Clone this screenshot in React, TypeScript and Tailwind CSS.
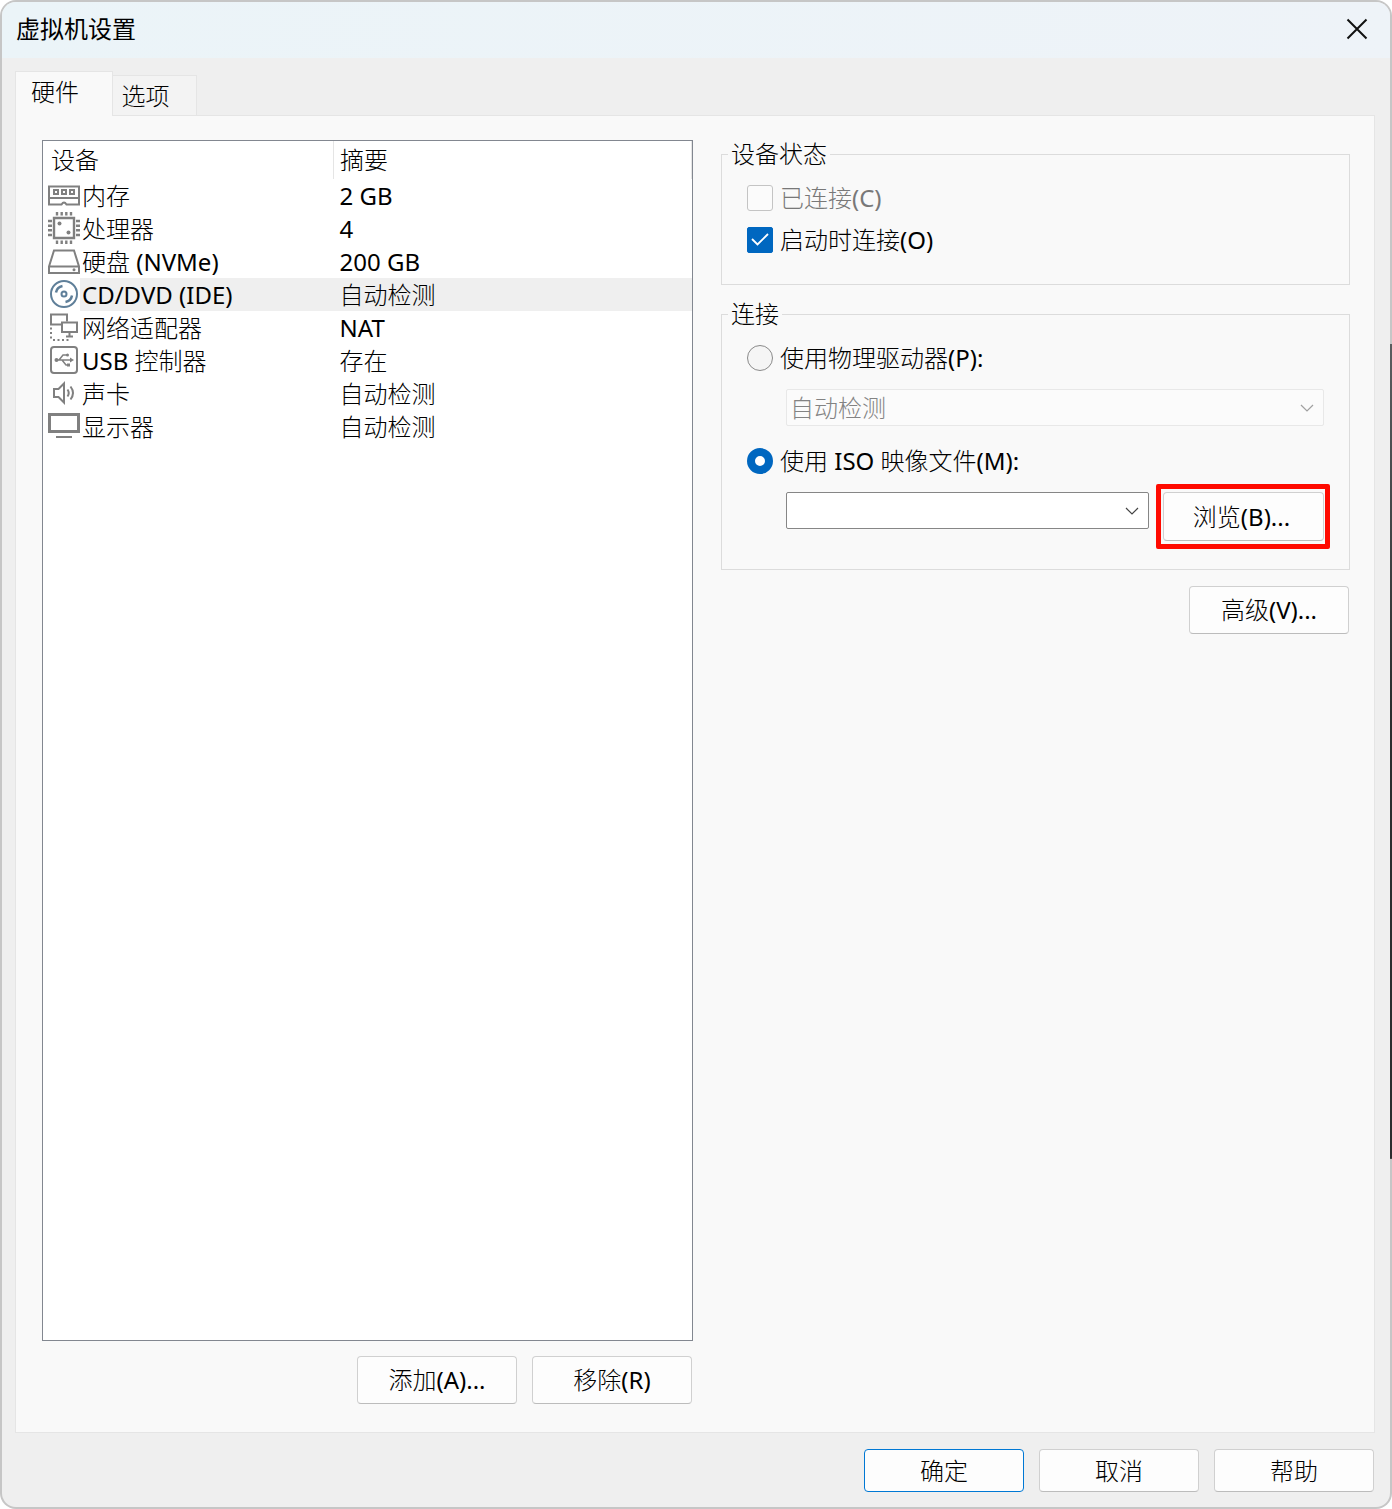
import React, { useState } from 'react';
import { clsx } from 'clsx';

interface Device {
  id: string;
  name: string;
  summary: string;
  icon: React.ReactNode;
}

const devices: Device[] = [
  {
    id: 'memory',
    name: '内存',
    summary: '2 GB',
    icon: (
      <>
        <path d="M1 7.500h30V19H1z" strokeWidth="2" />
        <path d="M1 19v6.500h12.500q2.500-4 5 0H31V19" strokeWidth="2" />
        <path d="M6 11h4v4H6zM14 11h4v4h-4zM22 11h4v4h-4z" strokeWidth="2" />
      </>
    ),
  },
  {
    id: 'cpu',
    name: '处理器',
    summary: '4',
    icon: (
      <>
        <path d="M6 6h20v20H6z" strokeWidth="2.400" />
        <path d="M9 0v3.500M13.700 0v3.500M18.300 0v3.500M23 0v3.500M9 28.500V32M13.700 28.500V32M18.300 28.500V32M23 28.500V32" strokeWidth="2.400" />
        <path d="M0 9h4M0 13.700h4M0 18.300h4M0 23h4M28 9h4M28 13.700h4M28 18.300h4M28 23h4" strokeWidth="2.400" />
        <circle cx="11.500" cy="11.500" r="2" fill="currentColor" stroke="none" />
        <circle cx="20.500" cy="20.500" r="2" fill="currentColor" stroke="none" />
      </>
    ),
  },
  {
    id: 'disk',
    name: '硬盘 (NVMe)',
    summary: '200 GB',
    icon: (
      <>
        <path d="M1 21.500L6 5.500h20l5 16V28H1zM1 21.500h30" strokeWidth="2" />
        <circle cx="26" cy="24.700" r="1.500" fill="currentColor" stroke="none" />
      </>
    ),
  },
  {
    id: 'cd',
    name: 'CD/DVD (IDE)',
    summary: '自动检测',
    icon: (
      <g className="text-[#5f7f99]">
        <circle cx="16" cy="16" r="13" strokeWidth="2" stroke="currentColor" />
        <circle cx="16" cy="16" r="2.500" strokeWidth="2" stroke="currentColor" />
        <path d="M8 14.500Q9 9 14.500 8M24 17.500Q23 23 17.500 24" strokeWidth="2.500" stroke="currentColor" />
      </g>
    ),
  },
  {
    id: 'network',
    name: '网络适配器',
    summary: 'NAT',
    icon: (
      <>
        <path d="M13 13.500H3V3.500h16v7" strokeWidth="2" />
        <path d="M14 11.500h15v9.500H14zM21.500 21v4M18 25.500h7" strokeWidth="2" />
        <path d="M3 16.500v13M5 29h16" strokeWidth="2" strokeDasharray="2 2.500" />
      </>
    ),
  },
  {
    id: 'usb',
    name: 'USB 控制器',
    summary: '存在',
    icon: (
      <>
        <rect x="3" y="3" width="26" height="26" rx="3" strokeWidth="2" />
        <path d="M8 16h15M11 16l4-5h4M14 16l4 5h3" strokeWidth="1.500" />
        <path d="M22 13.500l4 2.500-4 2.500z" fill="currentColor" stroke="none" />
        <circle cx="8.500" cy="16" r="2" fill="currentColor" stroke="none" />
        <circle cx="19.500" cy="11" r="1.500" fill="currentColor" stroke="none" />
        <path d="M19 19.500h3v3h-3z" fill="currentColor" stroke="none" />
      </>
    ),
  },
  {
    id: 'sound',
    name: '声卡',
    summary: '自动检测',
    icon: (
      <>
        <path d="M6 12h4.500L16 6.500v19L10.500 20H6z" strokeWidth="2" />
        <path d="M19.500 12.500q2.500 3.500 0 7M22.500 9.500q5 6.500 0 13" strokeWidth="2" />
      </>
    ),
  },
  {
    id: 'display',
    name: '显示器',
    summary: '自动检测',
    icon: (
      <>
        <path d="M1.500 4.500h29v17h-29z" strokeWidth="3" />
        <path d="M8 27h16" strokeWidth="2" />
      </>
    ),
  },
];

const buttonClass = 'rounded-[4px] border bg-[#fdfdfd] text-center hover:bg-[#f3f8fc]';
const plainBorder = 'border-[#d0d0d0] border-b-[#bcbcbc]';

function DeviceIcon({ children }: { children: React.ReactNode }) {
  return (
    <svg viewBox="0 0 32 32" className="h-8 w-8 shrink-0 text-[#808080]" fill="none" stroke="currentColor" aria-hidden="true">
      {children}
    </svg>
  );
}

function Chevron({ className }: { className: string }) {
  return (
    <svg viewBox="0 0 14 8" className={clsx('pointer-events-none absolute h-2 w-3.5', className)} fill="none" stroke="currentColor" aria-hidden="true">
      <path d="M1 1l6 6 6-6" strokeWidth="1.200" />
    </svg>
  );
}

export default function App() {
  const [selected, setSelected] = useState('cd');
  const [connectAtStart, setConnectAtStart] = useState(true);
  const [source, setSource] = useState('iso');

  return (
    <div className="flex min-h-screen flex-col rounded-[16px] bg-[#c6c6c6] bg-[linear-gradient(#5a5d5f,#2b2d2e_45%)] bg-[size:2px_54%] bg-[position:100%_49.5%] bg-no-repeat p-0.5 font-['Noto_Sans','Noto_Sans_CJK_SC_Light','Noto_Sans_CJK_SC',sans-serif] text-2xl leading-7 text-black">
      <div className="flex flex-1 flex-col overflow-hidden rounded-[14px] bg-[#efefef]">
        {/* Title bar */}
        <header className="flex h-14 shrink-0 items-center justify-between bg-gradient-to-r from-[#ebf4f8] to-[#eef3f8] pr-[22px] pb-0.5 pl-3.5">
          <h1 className="pb-0.5 font-['Noto_Sans_CJK_SC',sans-serif]">虚拟机设置</h1>
          <button type="button" aria-label="关闭" className="text-[#111]">
            <svg viewBox="0 0 22 22" className="h-[22px] w-[22px]" fill="none" stroke="currentColor" aria-hidden="true">
              <path d="M1.500 1.500l19 19M20.500 1.500l-19 19" strokeWidth="2" />
            </svg>
          </button>
        </header>

        {/* Tabs */}
        <div role="tablist" className="mt-[13px] flex shrink-0 items-end px-[13px]">
          <button type="button" role="tab" aria-selected="true" className="z-10 -mb-px h-[45px] w-[98px] border border-b-0 border-[#e5e5e5] bg-[#f9f9f9] pr-[18px] pb-1">
            硬件
          </button>
          <button type="button" role="tab" aria-selected="false" className="h-10 w-[84px] border border-b-0 border-l-0 border-[#e5e5e5] bg-[#f3f3f3] pr-[18px]">
            选项
          </button>
        </div>

        <main className="mr-[15px] ml-[13px] grid flex-1 grid-cols-[651fr_629fr] gap-7 border border-[#e5e5e5] bg-[#f9f9f9] pt-6 pr-6 pb-7 pl-[26px]">
          <section className="flex flex-col">
            <div className="flex-1 border border-[#828790] bg-white">
              <table className="w-full table-fixed border-collapse text-left">
                <colgroup>
                  <col className="w-[44.8%]" />
                  <col />
                </colgroup>
                <thead>
                  <tr className="h-[38px]">
                    <th scope="col" className="border-r border-[#e5e5e5] pl-2 font-normal">设备</th>
                    <th scope="col" className="border-r border-[#e5e5e5] pl-1.5 font-normal">摘要</th>
                  </tr>
                </thead>
                <tbody>
                  {devices.map((device) => (
                    <tr key={device.id} className="h-[33px] cursor-default" onClick={() => setSelected(device.id)}>
                      <td className="p-0">
                        <div className="flex h-[33px] items-start pl-[5px]">
                          <DeviceIcon>{device.icon}</DeviceIcon>
                          <span className={clsx('flex h-full flex-1 items-center pl-0.5', device.id === selected && 'bg-[#efefef]')}>
                            {device.name}
                          </span>
                        </div>
                      </td>
                      <td className={clsx('py-0 pl-1.5', device.id === selected && 'bg-[#efefef]')}>{device.summary}</td>
                    </tr>
                  ))}
                </tbody>
              </table>
            </div>
            <div className="mt-[15px] mr-px flex justify-end gap-[15px]">
              <button type="button" className={clsx(buttonClass, plainBorder, 'h-12 w-40')}>添加(A)...</button>
              <button type="button" className={clsx(buttonClass, plainBorder, 'h-12 w-40')}>移除(R)</button>
            </div>
          </section>

          <section className="flex flex-col">
            <fieldset className="border border-[#dcdcdc] px-[25px] pt-[9px] pb-[23px]">
              <legend className="-ml-[19px] px-[3px]">设备状态</legend>
              <label className="flex h-[42px] items-center gap-[7px] text-[#787878]">
                <input type="checkbox" disabled className="h-[26px] w-[26px] appearance-none rounded-[3px] border border-[#c4c4c4] bg-[#fbfbfb]" />
                已连接(C)
              </label>
              <label className="flex h-[42px] items-center gap-[7px]">
                <span className="relative flex">
                  <input
                    type="checkbox"
                    checked={connectAtStart}
                    onChange={(e) => setConnectAtStart(e.target.checked)}
                    className="h-[26px] w-[26px] appearance-none rounded-[2px] border border-[#8a8a8a] bg-white checked:border-[#0067c0] checked:bg-[#0067c0]"
                  />
                  {connectAtStart && (
                    <svg viewBox="0 0 26 26" className="pointer-events-none absolute inset-0 text-white" fill="none" stroke="currentColor" aria-hidden="true">
                      <path d="M5 12l5.500 5.500L21 7" strokeWidth="1.800" />
                    </svg>
                  )}
                </span>
                启动时连接(O)
              </label>
            </fieldset>

            <fieldset className="mt-[15px] border border-[#dcdcdc] px-[25px] pt-[9px] pb-7">
              <legend className="-ml-[19px] px-[3px]">连接</legend>
              <label className="flex h-[42px] items-center gap-[7px]">
                <input
                  type="radio"
                  name="source"
                  checked={source === 'physical'}
                  onChange={() => setSource('physical')}
                  className="h-[26px] w-[26px] appearance-none rounded-full border border-[#8a8a8a] bg-[#f5f5f5] checked:border-8 checked:border-[#0067c0] checked:bg-white"
                />
                使用物理驱动器(P):
              </label>
              <div className="relative mt-2.5 ml-[39px]">
                <select aria-label="物理驱动器" disabled={source !== 'physical'} className="block h-[37px] w-full appearance-none rounded-[2px] border border-[#e8e8e8] bg-[#fbfbfb] pl-[3px] text-[#838383] opacity-100">
                  <option>自动检测</option>
                </select>
                <Chevron className="top-[15px] right-2.5 text-[#a0a0a0]" />
              </div>
              <label className="mt-3.5 flex h-[42px] items-center gap-[7px]">
                <input
                  type="radio"
                  name="source"
                  checked={source === 'iso'}
                  onChange={() => setSource('iso')}
                  className="h-[26px] w-[26px] appearance-none rounded-full border border-[#8a8a8a] bg-[#f5f5f5] checked:border-8 checked:border-[#0067c0] checked:bg-white"
                />
                使用 ISO 映像文件(M):
              </label>
              <div className="mt-2.5 ml-[39px] flex items-start gap-3.5">
                <div className="relative flex-1">
                  <select aria-label="ISO 映像文件" className="block h-[37px] w-full appearance-none rounded-[2px] border border-[#868686] bg-white pl-[3px]">
                    <option></option>
                  </select>
                  <Chevron className="top-[15px] right-2.5 text-[#444]" />
                </div>
                <div className="relative">
                  <button type="button" className={clsx(buttonClass, plainBorder, 'h-[49px] w-[161px] pr-1')}>浏览(B)...</button>
                  <span className="pointer-events-none absolute -inset-y-2 -right-1.5 -left-[7px] rounded-[2px] border-[5px] border-[#ff0a00]" />
                </div>
              </div>
            </fieldset>

            <button type="button" className={clsx(buttonClass, plainBorder, 'mt-4 mr-px h-12 w-40 self-end')}>高级(V)...</button>
          </section>
        </main>

        <footer className="flex shrink-0 justify-end gap-[15px] pt-4 pr-4 pb-[15px]">
          <button type="button" className={clsx(buttonClass, 'h-[43px] w-40 border-[#0078d4]')}>确定</button>
          <button type="button" className={clsx(buttonClass, plainBorder, 'h-[43px] w-40')}>取消</button>
          <button type="button" className={clsx(buttonClass, plainBorder, 'h-[43px] w-40')}>帮助</button>
        </footer>
      </div>
    </div>
  );
}
